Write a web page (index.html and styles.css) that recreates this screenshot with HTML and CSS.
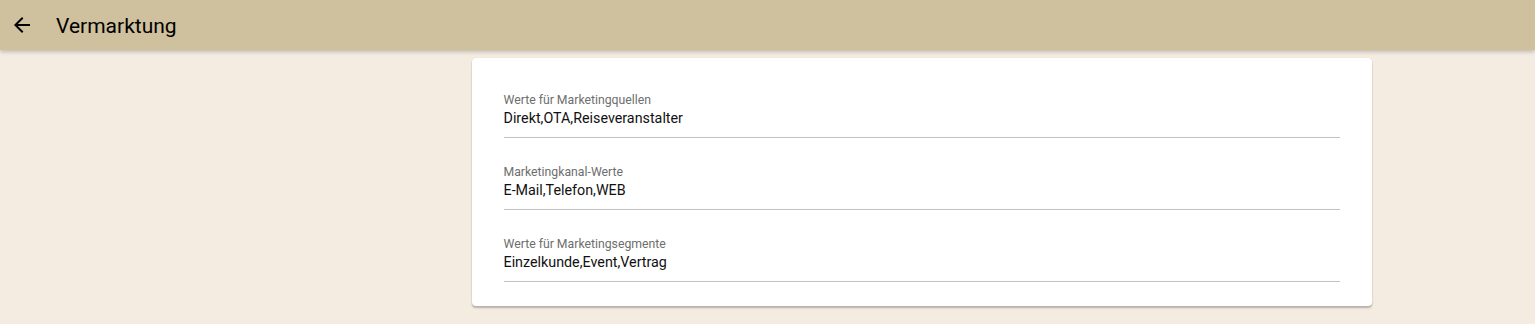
FILE: index.html
```html
<!DOCTYPE html>
<html lang="de">
<head>
    <meta charset="UTF-8">
    <title>Vermarktung</title>
    <link rel="stylesheet" href="styles.css">
</head>
<body>
    <header class="toolbar">
        <button class="back-btn" aria-label="Zurück">
            <svg width="24" height="24" viewBox="0 0 24 24"><path d="M20 11H7.83l5.59-5.59L12 4l-8 8 8 8 1.41-1.41L7.83 13H20v-2z" fill="#000"/></svg>
        </button>
        <h1 class="title">Vermarktung</h1>
    </header>

    <div class="layout">
        <aside class="side"></aside>
        <main class="content">
            <div class="card">
                <div class="field">
                    <label>Werte für Marketingquellen</label>
                    <input type="text" value="Direkt,OTA,Reiseveranstalter">
                </div>
                <div class="field">
                    <label>Marketingkanal-Werte</label>
                    <input type="text" value="E-Mail,Telefon,WEB">
                </div>
                <div class="field">
                    <label>Werte für Marketingsegmente</label>
                    <input type="text" value="Einzelkunde,Event,Vertrag">
                </div>
            </div>
        </main>
    </div>
</body>
</html>
```

FILE: styles.css
```css
body {
    margin: 0;
    font-family: Roboto, "Liberation Sans", sans-serif;
    background: #f4ebe1;
    min-height: 100vh;
}

.toolbar {
    height: 50px;
    background: #d0c19e;
    display: flex;
    align-items: center;
    padding: 0 10px;
    box-shadow: 0 2px 4px rgba(0, 0, 0, 0.2);
    position: relative;
}

.back-btn {
    background: none;
    border: none;
    padding: 0;
    width: 24px;
    height: 24px;
    display: flex;
    cursor: pointer;
}

.title {
    margin: 1px 0 0 22px;
    font-size: 21px;
    font-weight: 400;
    color: #000;
}

.layout {
    display: grid;
    grid-template-columns: 308px 1fr;
}

.content {
    display: flex;
    justify-content: center;
    padding-top: 8px;
}

.card {
    width: 836px;
    background: #fff;
    border-radius: 4px;
    padding: 8px 32px 24px;
    box-shadow: 0 2px 2px rgba(0, 0, 0, 0.25), 0 0 1px rgba(0, 0, 0, 0.1);
}

.field {
    height: 72px;
    box-sizing: border-box;
    padding-top: 26px;
    border-bottom: 1px solid #c2c2c2;
}

label {
    display: block;
    font-size: 12.25px;
    line-height: 16px;
    color: #6e6e6e;
}

input {
    display: block;
    width: 100%;
    border: none;
    outline: none;
    padding: 0;
    font-family: inherit;
    font-size: 14.3px;
    line-height: 21px;
    height: 21px;
    color: #111;
    background: transparent;
}
```
